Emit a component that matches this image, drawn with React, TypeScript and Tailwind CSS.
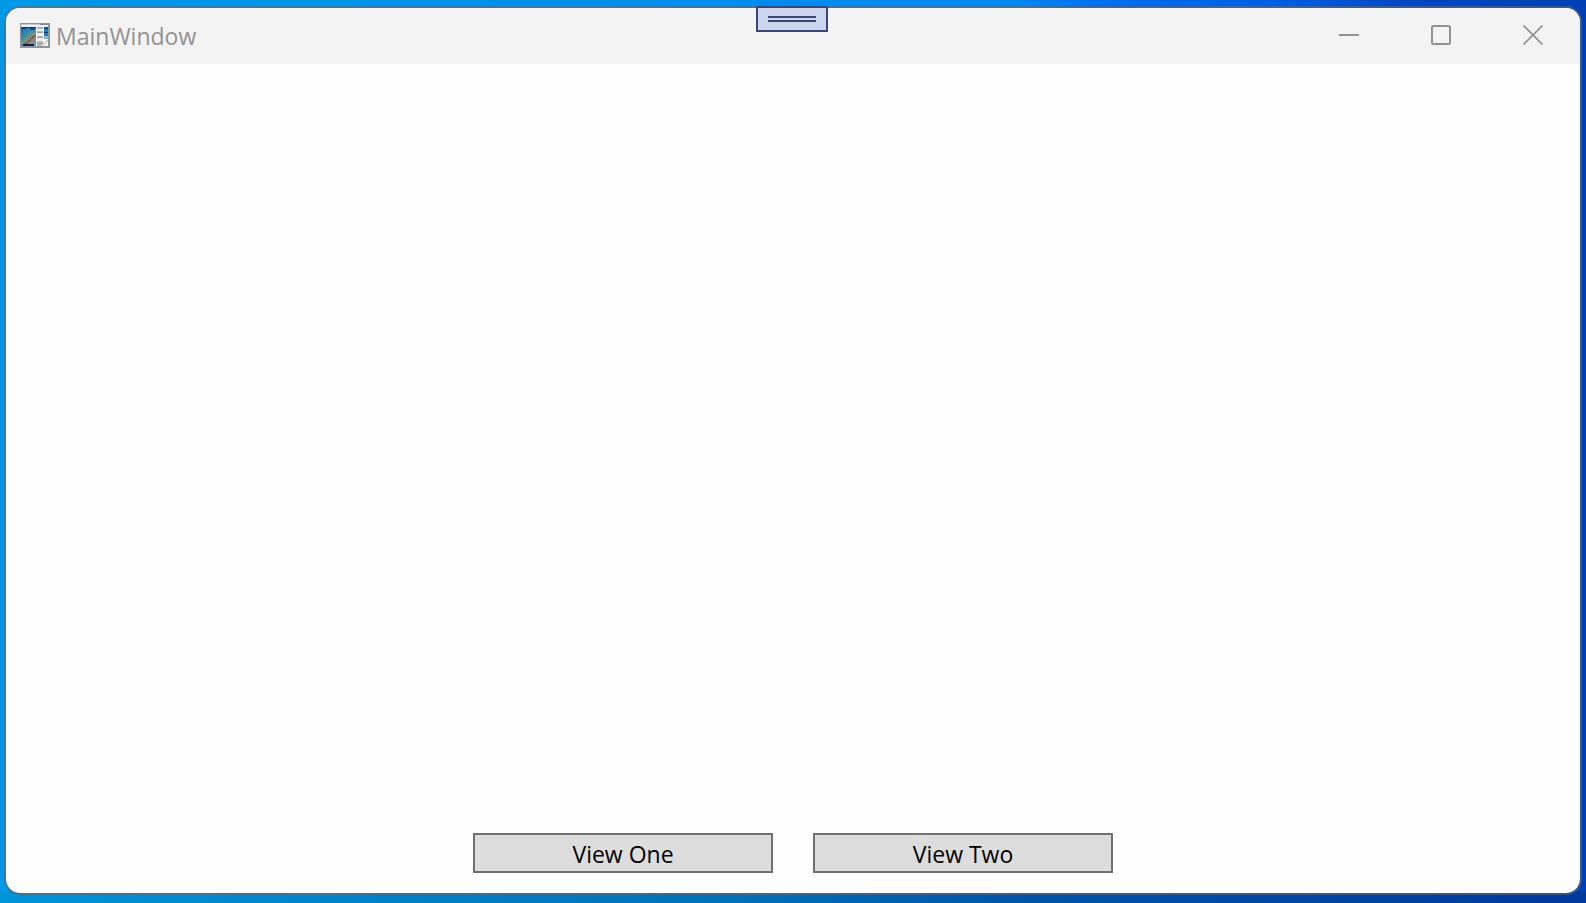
import React from "react";

function AppIcon() {
  return (
    <svg width="30" height="25" viewBox="0 0 30 25" shapeRendering="crispEdges" aria-hidden="true">
      <defs>
        <linearGradient id="pane" x1="0" y1="0" x2="0.7" y2="1">
          <stop offset="0" stopColor="#0a6cb4" />
          <stop offset="0.35" stopColor="#2f88b0" />
          <stop offset="0.6" stopColor="#6a9090" />
          <stop offset="1" stopColor="#84948c" />
        </linearGradient>
      </defs>
      <rect width="30" height="25" fill="#8b9799" />
      <rect x="1" y="1" width="27" height="22" fill="#eef1f4" />
      <rect x="1" y="1" width="19" height="1" fill="#c3ccd0" />
      <rect x="20" y="1" width="8" height="1" fill="#7d8c90" />
      <rect x="1" y="4" width="15" height="19" fill="url(#pane)" />
      <rect x="1" y="4" width="15" height="1" fill="#083a7c" />
      <rect x="2" y="5" width="4" height="1" fill="#0b3f86" />
      <rect x="10" y="5" width="5" height="2" fill="#0b4f96" />
      <path d="M4 20h2v-1h2v-2h2v-2h2v-2h2v-1h1" fill="none" stroke="#7a5636" />
      <rect x="3" y="21" width="11" height="2" fill="#0c1c50" />
      <path d="M17 5h6M17 9h6M17 14h6M17 19h6M17 22h5" stroke="#b9b5b0" strokeWidth="2" />
      <path d="M17 9h6M17 14h6M17 20h6" stroke="#a09a92" strokeWidth="1" />
      <rect x="24" y="4" width="4" height="9" fill="#1780c0" />
      <rect x="24" y="4" width="4" height="2" fill="#0a4a8c" />
      <rect x="24" y="9" width="4" height="1" fill="#0b3970" />
      <rect x="24" y="13" width="4" height="3" fill="#8cb4cc" />
      <path d="M23 22l5-5" stroke="#a9b0b2" />
    </svg>
  );
}

const captionButton = "flex h-14 w-23 items-center justify-center pb-0.5";
const viewButton =
  "h-10 w-[300px] border-2 border-[#707070] bg-[#dddddd] pt-0.5 text-[23px] leading-8 text-black";

export default function App() {
  return (
    <div className="relative flex h-screen flex-col bg-[linear-gradient(90deg,#0093d8,#0072b8_45%,#0054a8_65%,#00389c),linear-gradient(90deg,#0099e8,#0088f0_64%,#006cf0_70%,#0060e4_80%,#0048c4_88%,#0040b4)] bg-[length:100%_12px,100%_100%] bg-[position:bottom,top] bg-no-repeat px-1 pt-1.5 pb-2 font-['Open_Sans','Noto_Sans',sans-serif]">
      <main className="flex flex-1 flex-col overflow-hidden rounded-2xl border-2 border-[#606870]/60 bg-[#fefefe] bg-clip-padding">
        <header className="flex h-14 shrink-0 items-center bg-[#f3f3f3] pr-px pl-3.5">
          <div className="flex flex-1 items-center gap-1.5 pb-0.5">
            <AppIcon />
            <h1 className="pt-0.5 text-[23px] leading-8 font-normal text-[#929292]">MainWindow</h1>
          </div>
          <button type="button" aria-label="Minimize" className={captionButton}>
            <svg width="20" height="20" viewBox="0 0 20 20" stroke="#929292" strokeWidth="2">
              <path d="M0 10h20" />
            </svg>
          </button>
          <button type="button" aria-label="Maximize" className={captionButton}>
            <svg width="20" height="20" viewBox="0 0 20 20" fill="none" stroke="#929292" strokeWidth="2">
              <rect x="1" y="1" width="18" height="18" rx="1.5" />
            </svg>
          </button>
          <button type="button" aria-label="Close" className={captionButton}>
            <svg width="20" height="20" viewBox="0 0 20 20" stroke="#999490" strokeWidth="1.8">
              <path d="M0.5 0.5l19 19M19.5 0.5l-19 19" />
            </svg>
          </button>
        </header>
        <section className="flex flex-1 items-end justify-center gap-10 pb-5">
          <button type="button" className={viewButton}>View One</button>
          <button type="button" className={viewButton}>View Two</button>
        </section>
      </main>
      <button
        type="button"
        aria-label="Debug toolbar"
        className="absolute top-1.5 left-1/2 flex h-[26px] w-18 -translate-x-[37px] flex-col items-center justify-center gap-0.5 border-2 border-[#3a4675] bg-[#ccd5f0]"
      >
        <span className="h-0.5 w-12 bg-[#3a4675]" />
        <span className="h-0.5 w-12 bg-[#3a4675]" />
      </button>
    </div>
  );
}
